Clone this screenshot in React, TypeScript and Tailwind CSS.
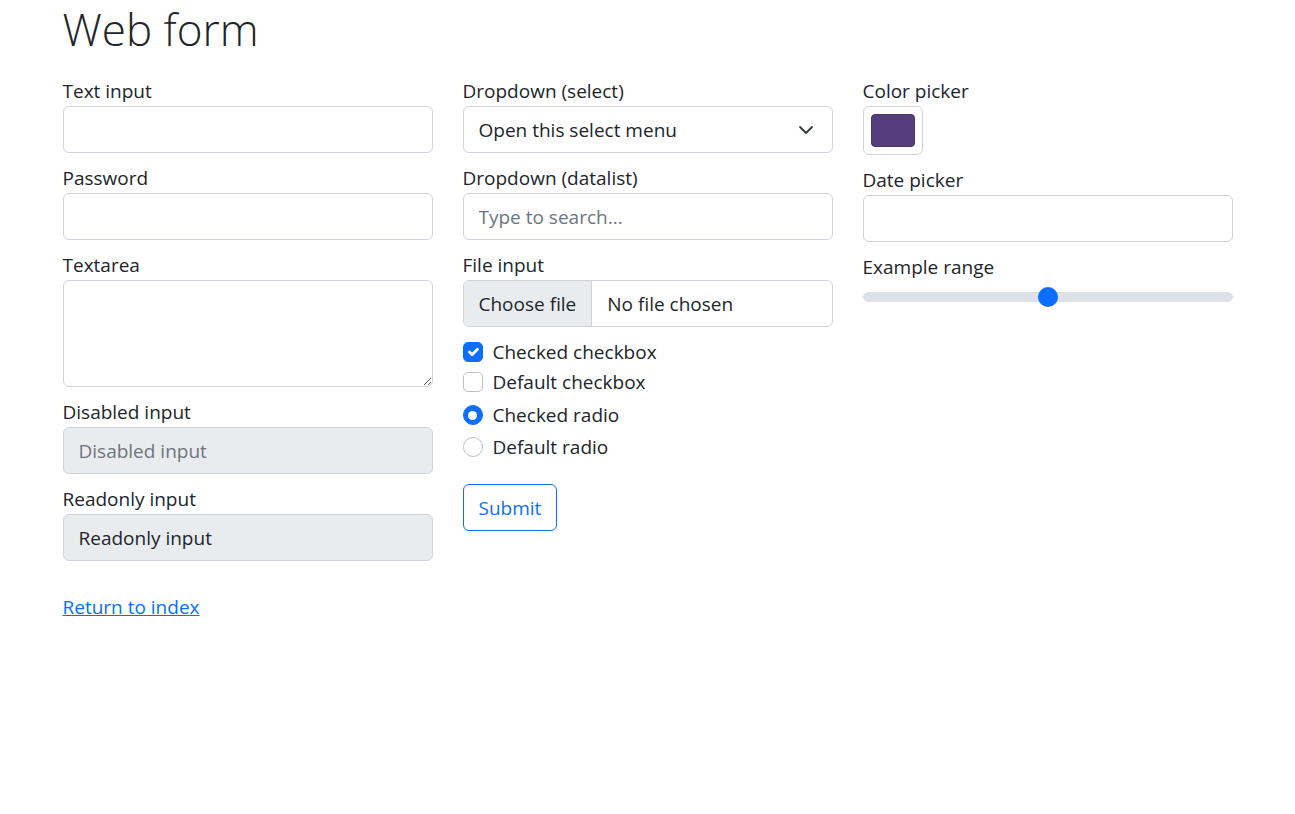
import React from 'react';

const inputBox =
  'block w-full h-[47px] px-[15px] border border-[#ced4da] rounded-[6px] text-[#212529] text-[19px] leading-[30px] outline-none';

function Field({ label, children }: { label: string; children: React.ReactNode }) {
  return (
    <label className="block w-full mb-[10px]">
      <span className="block h-[30px]">{label}</span>
      {children}
    </label>
  );
}

function Check({
  type,
  checked,
  label,
  className = '',
}: {
  type: 'checkbox' | 'radio';
  checked?: boolean;
  label: string;
  className?: string;
}) {
  const shape = type === 'radio' ? 'rounded-full' : 'rounded-[5px]';
  return (
    <div className={`flex items-start h-[30px] ${className}`}>
      <span
        className={`mt-[5px] w-[20px] h-[20px] shrink-0 flex items-center justify-center border ${shape} ${
          checked ? 'bg-[#0d6efd] border-[#0d6efd]' : 'bg-white border-[#bfbfbf]'
        }`}
      >
        {checked && type === 'checkbox' && (
          <svg width="20" height="20" viewBox="0 0 20 20">
            <path d="m6 10 3 3 6-6" fill="none" stroke="#fff" strokeWidth="3" strokeLinecap="round" strokeLinejoin="round" />
          </svg>
        )}
        {checked && type === 'radio' && <span className="w-[9px] h-[9px] rounded-full bg-white" />}
      </span>
      <span className="ml-[10px]">{label}</span>
    </div>
  );
}

export default function App() {
  return (
    <div className="min-h-screen bg-white text-[#212529] text-[19px] leading-[30px] font-['Segoe_UI','Open_Sans','Noto_Sans',sans-serif]">
      <div className="mx-auto w-[1200px] px-[15px]">
        <h1 className="pt-[1px] h-[56px] text-[44px] font-light leading-[56px] mb-[10px]">Web form</h1>

        <form className="grid grid-cols-3 gap-x-[30px]">
          {/* first column */}
          <div className="py-[10px]">
            <Field label="Text input">
              <input type="text" className={`${inputBox} bg-white`} />
            </Field>
            <Field label="Password">
              <input type="password" className={`${inputBox} bg-white`} />
            </Field>
            <Field label="Textarea">
              <textarea
                rows={3}
                className="block w-full h-[107px] px-[15px] py-[7.5px] border border-[#ced4da] rounded-[6px] bg-white text-[19px] leading-[30px] outline-none"
              />
            </Field>
            <Field label="Disabled input">
              <input
                type="text"
                disabled
                placeholder="Disabled input"
                className={`${inputBox} bg-[#e9ecef] placeholder:text-[#6c757d]`}
              />
            </Field>
            <Field label="Readonly input">
              <input type="text" readOnly value="Readonly input" className={`${inputBox} bg-[#e9ecef]`} />
            </Field>
          </div>

          {/* second column */}
          <div className="py-[10px]">
            <Field label="Dropdown (select)">
              <div className={`${inputBox} bg-white flex items-center justify-between`}>
                <span>Open this select menu</span>
                <svg width="16" height="16" viewBox="0 0 16 16" className="mr-[3px]">
                  <path d="m2 5 6 6 6-6" fill="none" stroke="#343a40" strokeWidth="1.8" strokeLinecap="round" strokeLinejoin="round" />
                </svg>
              </div>
            </Field>
            <Field label="Dropdown (datalist)">
              <input
                type="text"
                placeholder="Type to search..."
                className={`${inputBox} bg-white placeholder:text-[#6c757d]`}
              />
            </Field>
            <Field label="File input">
              <div className="flex w-full h-[47px] border border-[#ced4da] rounded-[6px] overflow-hidden bg-white">
                <span className="flex items-center px-[15px] bg-[#e9ecef] border-r border-[#ced4da]">Choose file</span>
                <span className="flex items-center px-[15px]">No file chosen</span>
              </div>
            </Field>
            <Check type="checkbox" checked label="Checked checkbox" className="mt-[1px]" />
            <Check type="checkbox" label="Default checkbox" className="mb-[3px]" />
            <Check type="radio" checked label="Checked radio" className="mb-[2px]" />
            <Check type="radio" label="Default radio" />
            <button
              type="button"
              className="mt-[22px] h-[47px] px-[15px] border border-[#0d6efd] rounded-[6px] text-[#0d6efd] bg-white"
            >
              Submit
            </button>
          </div>

          {/* third column */}
          <div className="py-[10px]">
            <Field label="Color picker">
              <div className="w-[60px] h-[49px] p-[7px] border border-[#ced4da] rounded-[6px] bg-white">
                <div className="w-full h-full rounded-[4px] bg-[#563d7c] border border-[#4a3569]" />
              </div>
            </Field>
            <Field label="Date picker">
              <input type="text" className={`${inputBox} bg-white`} />
            </Field>
            <Field label="Example range">
              <div className="relative h-[30px] flex items-center">
                <div className="w-full h-[10px] rounded-full bg-[#dee2e6]" />
                <div className="absolute left-1/2 top-[5px] -ml-[10px] w-[20px] h-[20px] rounded-full bg-[#0d6efd]" />
              </div>
            </Field>
          </div>
        </form>

        <div className="mt-[11px]">
          <a href="#" className="text-[#0d6efd] underline">
            Return to index
          </a>
        </div>
      </div>
    </div>
  );
}
